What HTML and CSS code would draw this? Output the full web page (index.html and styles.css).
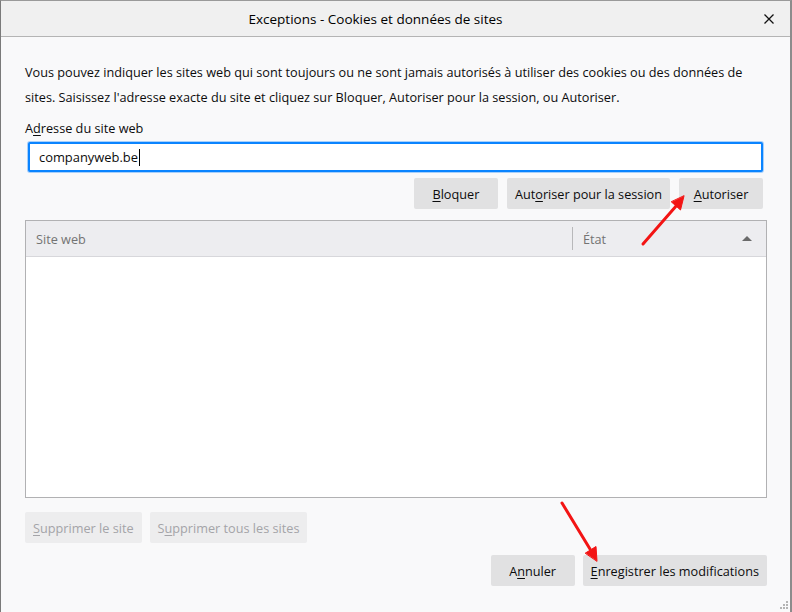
FILE: index.html
```html
<!DOCTYPE html>
<html lang="fr">
<head>
    <meta charset="UTF-8">
    <title>Exceptions - Cookies et données de sites</title>
    <link rel="stylesheet" href="styles.css">
</head>
<body>

<div class="window">
    <div class="titlebar">
        <span class="title">Exceptions - Cookies et données de sites</span>
        <span class="close">
            <svg width="10" height="10" viewBox="0 0 10 10">
                <path d="M0.5 0.5 L9.5 9.5 M9.5 0.5 L0.5 9.5" stroke="#111" stroke-width="1.3" fill="none"/>
            </svg>
        </span>
    </div>

    <div class="content">
        <p class="intro">Vous pouvez indiquer les sites web qui sont toujours ou ne sont jamais autorisés à utiliser des cookies ou des données de<br>sites. Saisissez l'adresse exacte du site et cliquez sur Bloquer, Autoriser pour la session, ou Autoriser.</p>

        <label class="field-label">A<u>d</u>resse du site web</label>
        <div class="url-input">companyweb.be<span class="caret"></span></div>

        <div class="actions">
            <button class="btn"><u>B</u>loquer</button>
            <button class="btn">Aut<u>o</u>riser pour la session</button>
            <button class="btn"><u>A</u>utoriser</button>
        </div>

        <div class="site-list">
            <div class="list-head">
                <div class="col-site">Site web</div>
                <div class="col-sep"></div>
                <div class="col-state">
                    <span>État</span>
                    <span class="sort-up"></span>
                </div>
            </div>
            <div class="list-body"></div>
        </div>

        <div class="remove-row">
            <button class="btn" disabled><u>S</u>upprimer le site</button>
            <button class="btn" disabled>S<u>u</u>pprimer tous les sites</button>
        </div>

        <div class="footer">
            <button class="btn">A<u>n</u>nuler</button>
            <button class="btn"><u>E</u>nregistrer les modifications</button>
        </div>
    </div>

    <!-- annotation arrows drawn over the dialog -->
    <svg class="arrows" width="792" height="612" viewBox="0 0 792 612">
        <g stroke="#f31414" stroke-width="3" stroke-linecap="round" fill="#f31414">
            <line x1="643" y1="244" x2="677" y2="205"/>
            <polygon points="684,196 680.5,210 671.5,202" stroke-width="1"/>
            <line x1="562" y1="503" x2="590" y2="549"/>
            <polygon points="597,561 596,546.5 585.5,553" stroke-width="1"/>
        </g>
    </svg>

    <svg class="grip" width="10" height="10" viewBox="0 0 10 10">
        <g fill="#b4b4b4">
            <rect x="7" y="1" width="2" height="2"/>
            <rect x="4" y="4" width="2" height="2"/>
            <rect x="7" y="4" width="2" height="2"/>
            <rect x="1" y="7" width="2" height="2"/>
            <rect x="4" y="7" width="2" height="2"/>
            <rect x="7" y="7" width="2" height="2"/>
        </g>
    </svg>
</div>

</body>
</html>
```

FILE: styles.css
```css
* {
    box-sizing: border-box;
}

body {
    margin: 0;
    font-family: "Open Sans", "Noto Sans", sans-serif;
    font-size: 12.7px;
    color: #0c0c0d;
    background: #f9f9fa;
}

.window {
    position: relative;
    width: 792px;
    height: 612px;
    display: flex;
    flex-direction: column;
    border-top: 1px solid #9a9a9a;
    border-left: 1px solid #7a7a7a;
    border-right: 2px solid #8c8c8c;
    overflow: hidden;
}

.titlebar {
    height: 36px;
    display: flex;
    align-items: center;
    background: #f0f0f0;
    border-bottom: 1px solid #b4b4b4;
}

.title {
    flex: 1;
    text-align: center;
    font-size: 13.5px;
    color: #000;
}

.close {
    width: 40px;
    display: flex;
    justify-content: center;
    padding-right: 2px;
}

.close svg {
    display: block;
}

.content {
    flex: 1;
    background: #f9f9fa;
    padding: 23px 23px 0 24px;
}

.intro {
    margin: 0;
    line-height: 25px;
}

.field-label {
    display: block;
    margin-top: 9px;
    line-height: 18px;
}

u {
    text-decoration-thickness: 1px;
    text-underline-offset: 2px;
}

.url-input {
    height: 30px;
    margin: 5px 4px 0 3px;
    padding-left: 9px;
    display: flex;
    align-items: center;
    background: #fff;
    border: 2px solid #0a84ff;
    border-radius: 2px;
    box-shadow: 0 0 0 1px #a8d0fb;
    font-size: 12.9px;
}

.caret {
    width: 1px;
    height: 17px;
    margin-left: 1px;
    background: #000;
}

.actions {
    display: flex;
    justify-content: flex-end;
    gap: 9px;
    margin: 6px 4px 0 0;
}

.btn {
    height: 31px;
    min-width: 84px;
    padding: 0 8px;
    font: inherit;
    color: #0c0c0d;
    background: #e1e1e2;
    border: none;
    border-radius: 2px;
}

.btn:disabled {
    color: #a4a4a8;
    background: #ededee;
}

.site-list {
    margin-top: 11px;
    height: 278px;
    display: flex;
    flex-direction: column;
    border: 1px solid #b1b1b3;
    background: #fff;
}

.list-head {
    height: 36px;
    display: flex;
    align-items: center;
    background: #ededf0;
    border-bottom: 1px solid #d7d7db;
    color: #737373;
}

.col-site {
    flex: 1;
    padding-left: 10px;
}

.col-sep {
    width: 1px;
    height: 23px;
    background: #b8b8ba;
}

.col-state {
    width: 193px;
    display: flex;
    justify-content: space-between;
    align-items: center;
    padding: 0 14px 0 10px;
}

.sort-up {
    width: 0;
    height: 0;
    border-left: 5px solid transparent;
    border-right: 5px solid transparent;
    border-bottom: 5px solid #6a6a6a;
}

.list-body {
    flex: 1;
}

.remove-row {
    display: flex;
    gap: 8px;
    margin-top: 14px;
}

.footer {
    display: flex;
    justify-content: flex-end;
    gap: 8px;
    margin-top: 12px;
}

.arrows {
    position: absolute;
    top: -1px;
    left: -1px;
    pointer-events: none;
}

.grip {
    position: absolute;
    right: 1px;
    bottom: 2px;
}
```
